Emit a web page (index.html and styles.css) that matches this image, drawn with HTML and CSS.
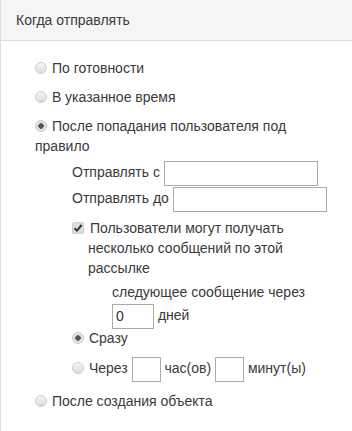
FILE: index.html
```
<!DOCTYPE html>
<html lang="ru">
<head>
    <meta charset="UTF-8">
    <title>Когда отправлять</title>
    <link rel="stylesheet" href="styles.css">
</head>
<body>

    <div class="panel">
        <div class="panel-heading">Когда отправлять</div>

        <div class="panel-body">
            <label class="option">
                <input type="radio" name="when"> По готовности
            </label>
            <label class="option">
                <input type="radio" name="when"> В указанное время
            </label>
            <label class="option">
                <input type="radio" name="when" checked> После попадания пользователя под правило
            </label>

            <!-- Rule settings -->
            <div class="rule-box">
                <div class="field-row">Отправлять с <input type="text" class="text-wide"></div>
                <div class="field-row">Отправлять до <input type="text" class="text-wide"></div>

                <label class="check">
                    <input type="checkbox" checked> Пользователи могут получать несколько сообщений по этой рассылке
                </label>

                <div class="repeat-box">
                    <div class="repeat-title">следующее сообщение через</div>
                    <div class="field-row"><input type="text" class="text-days" value="0"> дней</div>
                </div>

                <label class="sub-option">
                    <input type="radio" name="delay" checked> Сразу
                </label>
                <div class="sub-option delay-row">
                    <input type="radio" name="delay"> Через
                    <input type="text" class="text-small"> час(ов)
                    <input type="text" class="text-small"> минут(ы)
                </div>
            </div>

            <label class="option option-last">
                <input type="radio" name="when"> После создания объекта
            </label>
        </div>
    </div>

</body>
</html>
```

FILE: styles.css
```
body {
    margin: 0;
    font-family: "Liberation Sans", Arial, sans-serif;
    font-size: 14px;
    line-height: 20px;
    color: #3a3a3a;
    background: #fff;
}

.panel {
    border-left: 1px solid #ddd;
    height: 431px;
}

.panel-heading {
    background-color: #f5f5f5;
    border-bottom: 1px solid #ddd;
    height: 40px;
    line-height: 40px;
    padding-left: 15px;
}

.panel-body {
    padding: 17px 22px 0 34px;
}

.option {
    display: block;
    margin-bottom: 9px;
}

.option-last {
    margin-top: 10px;
}

/* radio and checkbox look */
input[type="radio"],
input[type="checkbox"] {
    -webkit-appearance: none;
    appearance: none;
    width: 12px;
    height: 12px;
    margin: 0 1px 0 0;
    vertical-align: -1px;
    border: 1px solid #cdcdcd;
    background: linear-gradient(#f6f6f6, #dcdcdc);
    box-sizing: border-box;
}

input[type="radio"] {
    border-radius: 50%;
}

input[type="radio"]:checked {
    background: radial-gradient(circle, #555 0, #555 2.5px, #e6e6e6 3px, #d6d6d6 100%);
}

input[type="checkbox"] {
    border-radius: 2px;
}

input[type="checkbox"]:checked {
    background: #ddd url("data:image/svg+xml,%3Csvg xmlns='http://www.w3.org/2000/svg' width='12' height='12'%3E%3Cpath d='M2.5 6.2 L5 8.6 L9.6 3' fill='none' stroke='%23333' stroke-width='2'/%3E%3C/svg%3E") no-repeat center;
}

input[type="text"] {
    font: inherit;
    color: #333;
    height: 25px;
    border: 1px solid #aaa;
    box-sizing: border-box;
    padding: 0 3px;
    margin: 0;
    vertical-align: middle;
}

.rule-box {
    padding-left: 37px;
    margin-top: -6px;
}

.field-row {
    height: 26px;
    line-height: 26px;
}

.text-wide {
    width: 154px;
}

.text-days {
    width: 42px;
}

.text-small {
    width: 29px;
    margin: 0 2px;
}

.check {
    display: block;
    padding-left: 16px;
    margin-top: 7px;
}

.check input {
    margin-left: -16px;
    margin-right: 2px;
}

.repeat-box {
    padding-left: 40px;
    margin-top: 4px;
}

.sub-option {
    display: block;
    margin-top: 0;
}

.delay-row {
    height: 26px;
    line-height: 26px;
    margin-top: 7px;
}
```
